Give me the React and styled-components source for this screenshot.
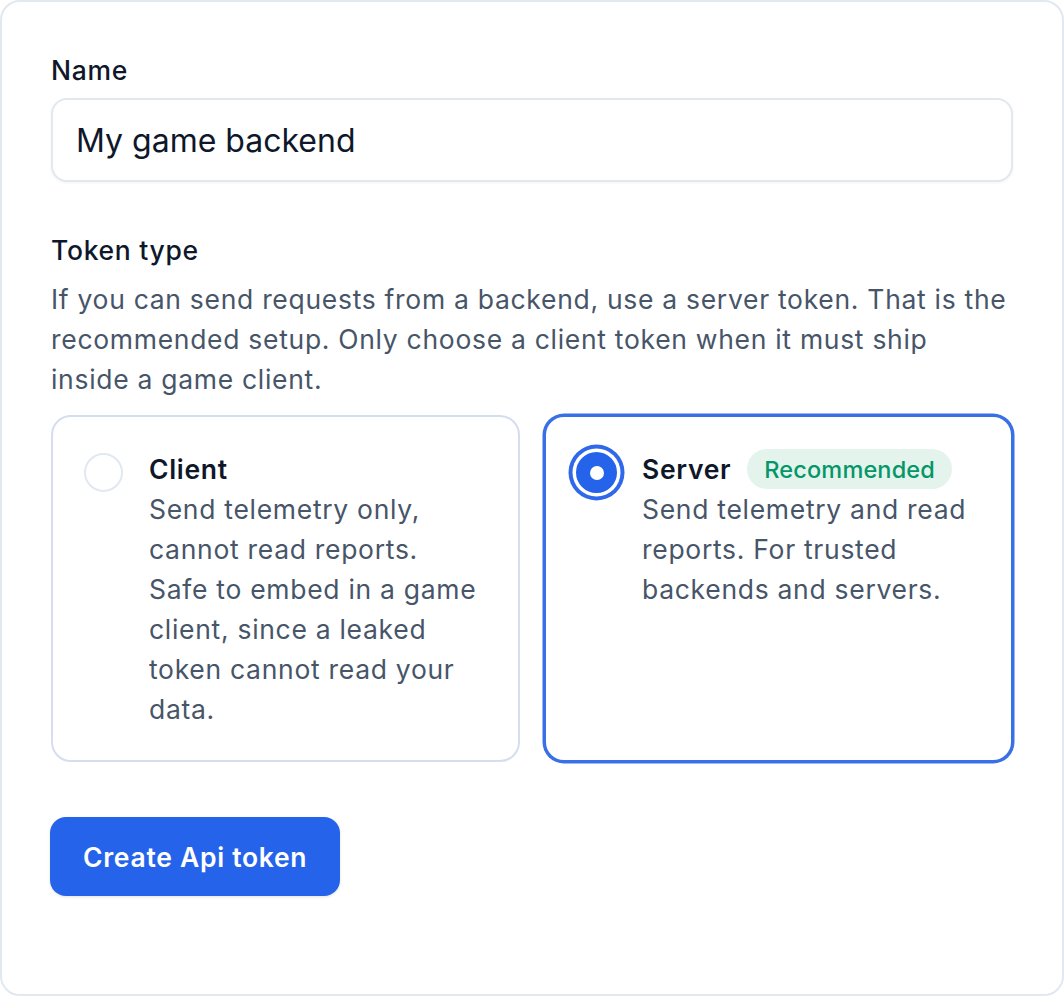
import React, { useState } from "react";
import styled, { createGlobalStyle, css } from "styled-components";

const GlobalStyle = createGlobalStyle`
  html, body {
    margin: 0;
    padding: 0;
    background: #ffffff;
  }
  body {
    font-family: Inter, "Noto Sans", "Liberation Sans", sans-serif;
    -webkit-font-smoothing: antialiased;
  }
  * { box-sizing: border-box; }
`;

const Card = styled.form`
  width: 1064px;
  min-height: 996px;
  background: #ffffff;
  border: 2px solid #e2e8f0;
  border-radius: 20px;
  padding: 48px 49px;
  display: flex;
  flex-direction: column;
`;

const Field = styled.div`
  display: flex;
  flex-direction: column;
  margin-bottom: ${(p) => p.$spacing || 0}px;
`;

const Label = styled.label`
  font-size: 26.5px;
  line-height: 40px;
  font-weight: 500;
  letter-spacing: 0.7px;
  color: #0f172a;
`;

const TextInput = styled.input`
  margin-top: 8px;
  height: 84px;
  width: 100%;
  padding: 0 24px 0 23px;
  font-family: inherit;
  font-size: 32px;
  letter-spacing: 0;
  color: #0f172a;
  background: #ffffff;
  border: 2px solid #e2e8f0;
  border-radius: 16px;
  box-shadow: 0 1px 3px rgba(15, 23, 42, 0.05);
  outline: none;
`;

const Hint = styled.p`
  margin: 9px 0 0;
  font-size: 26.5px;
  line-height: 40px;
  letter-spacing: 0.7px;
  color: #475569;
`;

const OptionGrid = styled.div`
  display: grid;
  grid-template-columns: 1fr 1fr;
  gap: 24px;
  margin-top: 16px;
`;

const Option = styled.label`
  display: flex;
  align-items: flex-start;
  gap: 26px;
  padding: 32px 36px 31px 31px;
  border-radius: 20px;
  border: 2px solid #d5deee;
  background: #ffffff;
  cursor: pointer;
  ${(p) =>
    p.$active &&
    css`
      border-color: #3a70e6;
      box-shadow: 0 0 0 1.5px #3a70e6;
    `}
`;

const Radio = styled.span`
  flex: none;
  width: 39px;
  height: 39px;
  margin-top: 4px;
  border-radius: 50%;
  border: 2px solid #e2e8f0;
  background: #ffffff;
  display: flex;
  align-items: center;
  justify-content: center;
  ${(p) =>
    p.$checked &&
    css`
      width: 41px;
      height: 41px;
      margin: 3px -1px 0;
      border-color: #2563eb;
      background: #2563eb;
      box-shadow: 0 0 0 3.5px #ffffff, 0 0 0 7.5px #2f68ea;
      &::after {
        content: "";
        width: 14px;
        height: 14px;
        border-radius: 50%;
        background: #ffffff;
      }
    `}
`;

const OptionBody = styled.div`
  display: flex;
  flex-direction: column;
  min-width: 0;
`;

const TitleRow = styled.div`
  display: flex;
  align-items: center;
  gap: 16px;
`;

const OptionTitle = styled.span`
  font-size: 26.5px;
  line-height: 40px;
  font-weight: 600;
  letter-spacing: 0.7px;
  color: #0f172a;
`;

const Badge = styled.span`
  height: 40px;
  padding: 0 17px;
  border-radius: 999px;
  background: #e4f4ed;
  color: #059669;
  font-size: 23.5px;
  font-weight: 500;
  letter-spacing: 0.15px;
  display: inline-flex;
  align-items: center;
`;

const OptionText = styled.span`
  font-size: 26.5px;
  line-height: 40px;
  letter-spacing: 0.7px;
  color: #475569;
`;

const Actions = styled.div`
  margin: 55px 0 0 -1px;
  display: flex;
`;

const PrimaryButton = styled.button`
  height: 79px;
  padding: 0 33px;
  border: none;
  border-radius: 16px;
  background: #2563eb;
  color: #ffffff;
  font-family: inherit;
  font-size: 26.5px;
  font-weight: 600;
  letter-spacing: 0.7px;
  box-shadow: 0 1px 3px rgba(15, 23, 42, 0.12);
  cursor: pointer;
`;

const tokenTypes = [
  {
    id: "client",
    title: "Client",
    text: "Send telemetry only, cannot read reports. Safe to embed in a game client, since a leaked token cannot read your data.",
  },
  {
    id: "server",
    title: "Server",
    badge: "Recommended",
    text: "Send telemetry and read reports. For trusted backends and servers.",
  },
];

export default function App() {
  const [name, setName] = useState("My game backend");
  const [type, setType] = useState("server");

  return (
    <>
      <GlobalStyle />
      <Card onSubmit={(e) => e.preventDefault()}>
        <Field $spacing={48}>
          <Label htmlFor="token-name">Name</Label>
          <TextInput
            id="token-name"
            value={name}
            onChange={(e) => setName(e.target.value)}
          />
        </Field>

        <Field>
          <Label as="span">Token type</Label>
          <Hint>
            If you can send requests from a backend, use a server token. That is
            the recommended setup. Only choose a client token when it must ship
            inside a game client.
          </Hint>
        </Field>

        <OptionGrid role="radiogroup">
          {tokenTypes.map((t) => (
            <Option
              key={t.id}
              $active={type === t.id}
              onClick={() => setType(t.id)}
            >
              <Radio $checked={type === t.id} role="radio" aria-checked={type === t.id} />
              <OptionBody>
                <TitleRow>
                  <OptionTitle>{t.title}</OptionTitle>
                  {t.badge && <Badge>{t.badge}</Badge>}
                </TitleRow>
                <OptionText>{t.text}</OptionText>
              </OptionBody>
            </Option>
          ))}
        </OptionGrid>

        <Actions>
          <PrimaryButton type="submit">Create Api token</PrimaryButton>
        </Actions>
      </Card>
    </>
  );
}
